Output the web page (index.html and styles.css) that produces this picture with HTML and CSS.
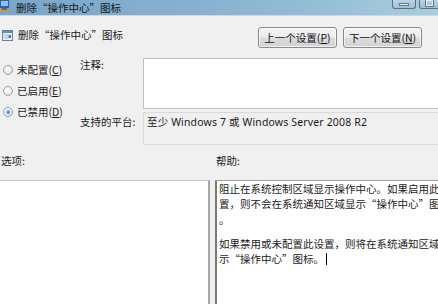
FILE: index.html
```html
<!DOCTYPE html>
<html lang="zh-CN">
<head>
<meta charset="utf-8">
<title>删除“操作中心”图标</title>
<link rel="stylesheet" href="styles.css">
</head>
<body>
<div class="window">
  <div class="titlebar">
    <svg class="app-icon" width="10" height="12" viewBox="0 0 10 12">
      <rect x="0" y="0" width="9" height="8" fill="#2f5fa8"/>
      <rect x="1" y="1" width="7" height="5" fill="#8fc0ef"/>
      <rect x="2" y="8" width="5" height="2" fill="#5a6a80"/>
      <rect x="0" y="10" width="10" height="2" fill="#c0a040"/>
    </svg>
    <span class="title-text">删除“操作中心”图标</span>
    <div class="winbtns">
      <span class="winbtn min"><span class="bar"></span></span>
      <span class="winbtn max"><span class="box"></span></span>
    </div>
  </div>

  <div class="header">
    <div class="policy-name">
      <svg class="policy-icon" width="11" height="11" viewBox="0 0 11 11">
        <rect x="0.5" y="0.5" width="10" height="10" fill="#e8eef5" stroke="#6d7f95"/>
        <rect x="1" y="1" width="9" height="2" fill="#6a8cb8"/>
        <rect x="2" y="4" width="4" height="5" fill="#c8d4e2"/>
        <rect x="6.5" y="5" width="2.5" height="3" fill="#3d78c9"/>
      </svg>
      <span>删除“操作中心”图标</span>
    </div>
    <div class="nav-buttons">
      <button class="btn">上一个设置(<u>P</u>)</button>
      <button class="btn">下一个设置(<u>N</u>)</button>
    </div>
  </div>

  <div class="settings">
    <div class="radios">
      <label class="radio"><span class="dot"></span><span class="radio-text">未配置(<u>C</u>)</span></label>
      <label class="radio"><span class="dot"></span><span class="radio-text">已启用(<u>E</u>)</span></label>
      <label class="radio"><span class="dot checked"></span><span class="radio-text">已禁用(<u>D</u>)</span></label>
    </div>
    <div class="fields">
      <div class="field-row comment-row">
        <span class="field-label">注释:</span>
        <div class="textarea"></div>
      </div>
      <div class="field-row platform-row">
        <span class="field-label">支持的平台:</span>
        <div class="platform">至少 Windows 7 或 Windows Server 2008 R2</div>
      </div>
    </div>
  </div>

  <div class="panes">
    <div class="pane options-pane">
      <div class="pane-label">选项:</div>
      <div class="pane-box options-box"></div>
    </div>
    <div class="pane help-pane">
      <div class="pane-label">帮助:</div>
      <div class="pane-box help-box">
        <p class="help-para">阻止在系统控制区域显示操作中心。如果启用此设<br>置，则不会在系统通知区域显示“操作中心”图标<br>。</p>
        <p class="help-para">如果禁用或未配置此设置，则将在系统通知区域显<br>示“操作中心”图标。<span class="caret"></span></p>
      </div>
    </div>
  </div>
</div>
</body>
</html>
```

FILE: styles.css
```css
* { box-sizing: border-box; }
html, body {
  margin: 0;
  padding: 0;
  width: 438px;
  height: 304px;
  overflow: hidden;
  background: #f0f0f0;
}
body {
  font-family: "Noto Sans", "Noto Sans CJK SC", sans-serif;
  font-size: 10.5px;
  color: #1a1a1a;
}
.window {
  width: 438px;
  height: 304px;
  display: flex;
  flex-direction: column;
}
u { text-decoration: underline; text-underline-offset: 1px; }

/* Title bar */
.titlebar {
  height: 16px;
  flex: none;
  display: flex;
  align-items: center;
  background: linear-gradient(to right, #7aa5c9 0%, #86afcf 40%, #93bcd6 70%, #a9cedf 100%);
  border-bottom: 1px solid #c9d9e6;
}
.app-icon {
  flex: none;
  margin: -4px 0 0 0;
}
.title-text {
  margin-left: 6px;
  font-family: "Noto Sans CJK SC", sans-serif;
  font-size: 10.5px;
  color: #101820;
  line-height: 14px;
}
.winbtns {
  margin-left: auto;
  align-self: flex-start;
  display: flex;
  gap: 3px;
  margin-right: -2px;
}
.winbtn {
  height: 9px;
  border: 1px solid #5a7185;
  border-top: none;
  border-radius: 0 0 3px 3px;
  background: linear-gradient(#b9d3e2, #9fc1d5);
  display: flex;
  align-items: center;
  justify-content: center;
}
.winbtn.min { width: 24px; }
.winbtn.max { width: 21px; }
.winbtn .bar {
  width: 10px;
  height: 3px;
  background: #e8f0f5;
  border: 1px solid #5f7688;
  margin-top: 1px;
}
.winbtn .box {
  width: 9px;
  height: 7px;
  border: 1px solid #5f7688;
  border-top: none;
  background: transparent;
  box-shadow: inset 0 0 0 1px #e8f0f5;
  margin-top: -2px;
}

/* Header */
.header {
  height: 42px;
  flex: none;
  display: flex;
  align-items: flex-start;
  padding-top: 11px;
}
.policy-name {
  display: flex;
  align-items: center;
  gap: 5px;
  padding-left: 2px;
  padding-top: 1px;
  font-family: "Noto Sans CJK SC", sans-serif;
  line-height: 14px;
}
.policy-icon { flex: none; margin-top: 1px; }
.nav-buttons {
  margin-left: auto;
  display: flex;
  gap: 6px;
  padding-right: 16px;
}
.btn {
  width: 79px;
  height: 21px;
  padding: 0;
  font: inherit;
  font-family: "Noto Sans CJK SC", sans-serif;
  font-size: 10.5px;
  color: #111;
  border: 1px solid #8a8a8a;
  border-radius: 3px;
  background: linear-gradient(#f4f4f4 0%, #ececec 48%, #dcdcdc 52%, #d2d2d2 100%);
  box-shadow: inset 0 0 0 1px rgba(255,255,255,0.7);
  line-height: 17px;
}

/* Settings */
.settings {
  height: 87px;
  flex: none;
  display: flex;
}
.radios {
  width: 80px;
  flex: none;
  display: flex;
  flex-direction: column;
  padding-top: 1px;
}
.radio {
  height: 21px;
  display: flex;
  align-items: center;
  gap: 4px;
  padding-left: 3px;
  font-family: "Noto Sans CJK SC", sans-serif;
  color: #1a1a1a;
}
.radio-text { white-space: nowrap; }
.dot {
  width: 10px;
  height: 10px;
  border-radius: 50%;
  border: 1px solid #9aa0a6;
  background: radial-gradient(circle at 40% 35%, #ffffff 0%, #e8e8e8 70%, #d8d8d8 100%);
  flex: none;
  position: relative;
}
.dot.checked::after {
  content: "";
  position: absolute;
  left: 2px;
  top: 2px;
  width: 4px;
  height: 4px;
  border-radius: 50%;
  background: radial-gradient(circle at 35% 35%, #7ec4ff, #1d5fb8);
}
.fields {
  flex: 1;
  display: flex;
  flex-direction: column;
  gap: 3px;
  min-width: 0;
}
.field-row {
  display: flex;
  min-width: 0;
}
.field-label {
  width: 63px;
  flex: none;
  font-family: "Noto Sans CJK SC", sans-serif;
  line-height: 14px;
}
.platform-row .field-label { padding-top: 3px; }
.textarea {
  flex: 1;
  height: 51px;
  margin-right: -20px;
  background: #fff;
  border: 1px solid #b3c3d3;
  border-right: none;
}
.platform {
  flex: 1;
  height: 33px;
  margin-right: -20px;
  border: 1px solid #dadada;
  border-right: none;
  background: #f0f0f0;
  padding: 2px 0 0 3px;
  line-height: 14px;
  white-space: nowrap;
  letter-spacing: 0.15px;
}

/* Panes */
.panes {
  flex: 1;
  display: flex;
  gap: 5px;
  padding-top: 9px;
  min-height: 0;
}
.pane {
  display: flex;
  flex-direction: column;
  min-height: 0;
}
.options-pane { width: 210px; flex: none; }
.help-pane { flex: 1; min-width: 0; }
.pane-label {
  height: 26px;
  flex: none;
  font-family: "Noto Sans CJK SC", sans-serif;
  line-height: 14px;
  padding-left: 1px;
}
.pane-box {
  flex: 1;
  background: #fff;
}
.options-box {
  border: 1px solid #c8c8c8;
  border-left: none;
  border-right: 2px solid #a8a8a8;
  border-bottom: none;
}
.help-box {
  border: 1px solid #a0a0a0;
  border-left: 2px solid #7a7a7a;
  border-right: none;
  border-bottom: none;
  padding: 0 0 0 2px;
  overflow: hidden;
  font-family: "Noto Sans CJK SC", sans-serif;
  line-height: 15.3px;
}
.help-para {
  margin: 0;
  white-space: nowrap;
}
.help-para + .help-para { margin-top: 9px; }
.caret {
  display: inline-block;
  width: 1px;
  height: 12px;
  background: #000;
  vertical-align: -2px;
  margin-left: 2px;
}
```
